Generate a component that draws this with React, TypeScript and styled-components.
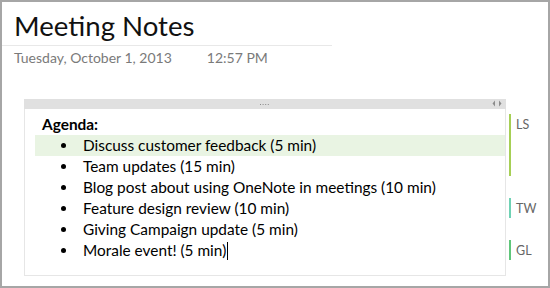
import styled, { createGlobalStyle } from 'styled-components';

const GlobalStyle = createGlobalStyle`
    html, body {
        margin: 0;
        padding: 0;
        background: #ffffff;
    }
    body {
        font-family: Lato, "Liberation Sans", sans-serif;
    }
`;

const Page = styled.div`
    box-sizing: border-box;
    width: 550px;
    height: 288px;
    border: 2px solid #a6a6a6;
    background: #ffffff;
    overflow: hidden;
`;

const Header = styled.div`
    width: 330px;
    padding: 9px 0 0 12px;
    box-sizing: border-box;
    border-bottom: 1px solid #e8e8e8;
    height: 44px;
`;

const Title = styled.h1`
    margin: 0;
    font-family: Lato, "Liberation Sans", sans-serif;
    font-weight: 400;
    font-size: 27.6px;
    line-height: 30px;
    color: #111111;
`;

const DateRow = styled.div`
    display: flex;
    gap: 35px;
    padding: 3px 0 0 12px;
    font-size: 14px;
    line-height: 18px;
    color: #7a7a7a;
`;

const NoteArea = styled.div`
    display: flex;
    align-items: flex-start;
    margin: 32px 0 0 22px;
`;

const Outline = styled.div`
    box-sizing: border-box;
    width: 482px;
    height: 177px;
    border: 1px solid #e6e6e6;
    border-top: none;
`;

const Handle = styled.div`
    display: flex;
    align-items: center;
    justify-content: center;
    position: relative;
    height: 10px;
    margin: 0 -1px;
    background: #e0e0e0;
`;

const Arrows = styled.svg`
    position: absolute;
    right: 4px;
    top: 1px;
`;

const Body = styled.div`
    padding-top: 5px;
    font-size: 15.4px;
    line-height: 21px;
    color: #000000;
`;

const Heading = styled.div`
    padding-left: 17px;
    font-weight: 700;
`;

const Item = styled.div<{ $active?: boolean }>`
    display: flex;
    margin-left: 10px;
    background: ${({ $active }) => ($active ? '#e9f4e3' : 'transparent')};
`;

const Bullet = styled.span`
    width: 48px;
    display: flex;
    align-items: center;
    padding-left: 26px;
    box-sizing: border-box;

    &::before {
        content: '';
        width: 5px;
        height: 5px;
        border-radius: 50%;
        background: #000000;
    }
`;

const Caret = styled.span`
    display: inline-block;
    width: 1px;
    height: 18px;
    background: #000000;
    vertical-align: -4px;
    margin-left: 1px;
`;

const Authors = styled.div`
    display: grid;
    grid-template-rows: repeat(7, 21px);
    margin: 15px 0 0 3px;
`;

const Mark = styled.div<{ $color: string; $row: number; $span: number }>`
    grid-row: ${({ $row, $span }) => `${$row} / span ${$span}`};
    border-left: 2px solid ${({ $color }) => $color};
    padding-left: 5px;
    margin: 0 0 1px;
    font-size: 12.5px;
    line-height: 21px;
    color: #666666;
`;

const items = [
    'Discuss customer feedback (5 min)',
    'Team updates (15 min)',
    'Blog post about using OneNote in meetings (10 min)',
    'Feature design review (10 min)',
    'Giving Campaign update (5 min)',
    'Morale event! (5 min)',
];

const marks = [
    { label: 'LS', color: '#a6cf55', row: 1, span: 3 },
    { label: 'TW', color: '#6fd2b4', row: 5, span: 1 },
    { label: 'GL', color: '#5fc67a', row: 7, span: 1 },
];

export default function App() {
    return (
        <>
            <GlobalStyle />
            <Page>
                <Header>
                    <Title>Meeting Notes</Title>
                </Header>
                <DateRow>
                    <span>Tuesday, October 1, 2013</span>
                    <span>12:57 PM</span>
                </DateRow>

                <NoteArea>
                    <Outline>
                        {/* drag handle along the top of the note container */}
                        <Handle>
                            <svg width="10" height="3" viewBox="0 0 10 3">
                                {[0, 1, 2, 3].map(i => (
                                    <rect key={i} x={i * 2.6} y="1" width="1" height="1" fill="#8a8a8a" />
                                ))}
                            </svg>
                            <Arrows width="10" height="7" viewBox="0 0 10 7">
                                <path d="M3 0.5 L0.5 3.5 L3 6.5 Z" fill="#8c8c8c" />
                                <path d="M7 0.5 L9.5 3.5 L7 6.5 Z" fill="#8c8c8c" />
                            </Arrows>
                        </Handle>
                        <Body>
                            <Heading>Agenda:</Heading>
                            {items.map((text, i) => (
                                <Item key={text} $active={i === 0}>
                                    <Bullet />
                                    <span>
                                        {text}
                                        {i === items.length - 1 && <Caret />}
                                    </span>
                                </Item>
                            ))}
                        </Body>
                    </Outline>

                    <Authors>
                        {marks.map(m => (
                            <Mark key={m.label} $color={m.color} $row={m.row} $span={m.span}>
                                {m.label}
                            </Mark>
                        ))}
                    </Authors>
                </NoteArea>
            </Page>
        </>
    );
}
